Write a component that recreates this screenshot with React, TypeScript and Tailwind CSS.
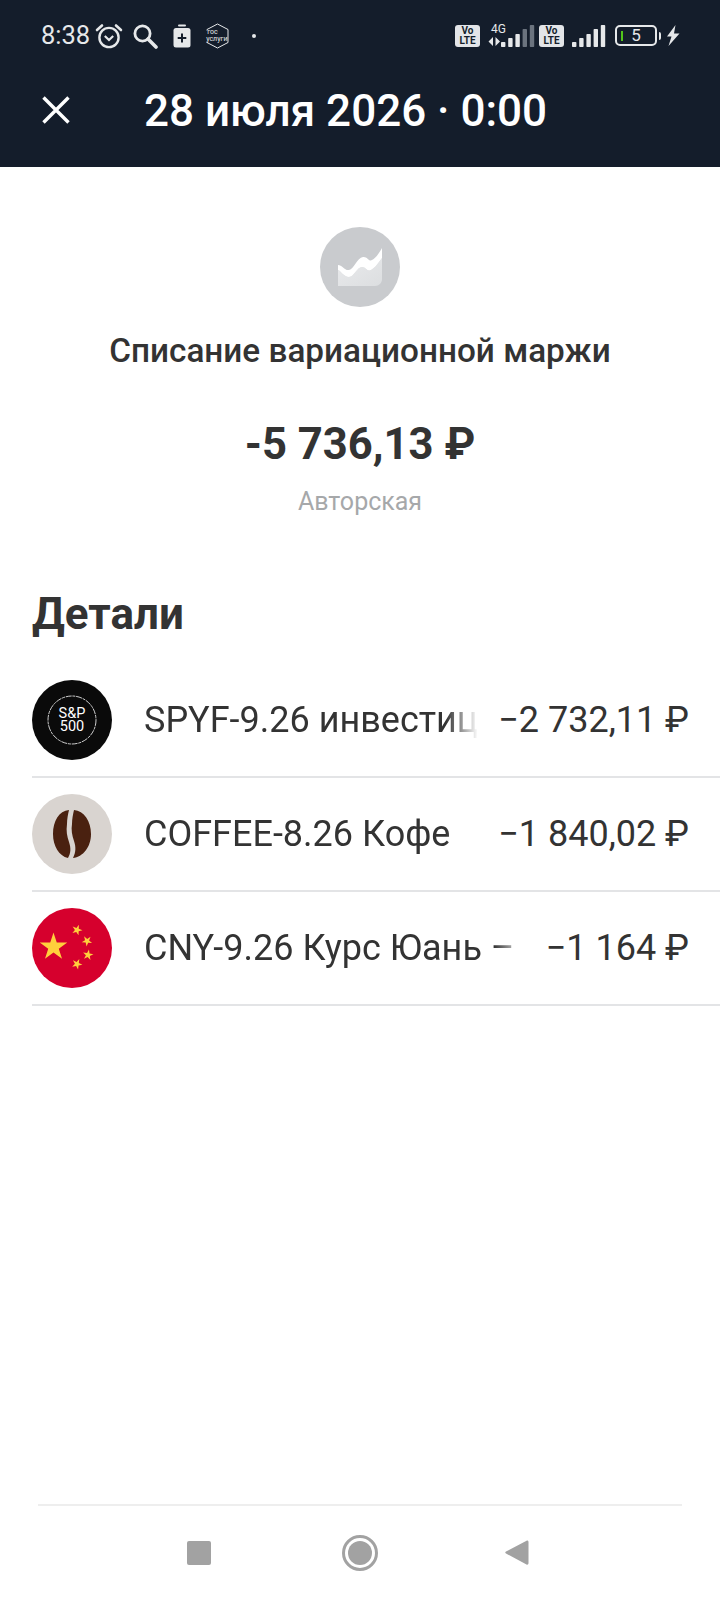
import React from "react";

const font = { fontFamily: "Roboto, sans-serif" };

function Star({ cx, cy, r, rot = 0 }: { cx: number; cy: number; r: number; rot?: number }) {
  const pts: string[] = [];
  for (let i = 0; i < 10; i++) {
    const rad = i % 2 === 0 ? r : r * 0.382;
    const a = ((-90 + rot + i * 36) * Math.PI) / 180;
    pts.push(`${(cx + rad * Math.cos(a)).toFixed(2)},${(cy + rad * Math.sin(a)).toFixed(2)}`);
  }
  return <polygon points={pts.join(" ")} fill="#ffcf3c" />;
}

function VoLte() {
  return (
    <div className="flex h-[22px] w-[25px] flex-col items-center justify-center rounded-[3px] bg-[#e3e5e8] text-[10px] font-bold leading-[10px] text-[#141d2b]">
      <span>Vo</span>
      <span>LTE</span>
    </div>
  );
}

function Bars({ dim }: { dim: number }) {
  const hs = [5, 9, 13, 18, 22];
  return (
    <svg width="34" height="22" viewBox="0 0 34 22">
      {hs.map((h, i) => (
        <rect key={i} x={i * 7.2} y={22 - h} width="4.4" height={h} rx="0.8" fill={i >= 5 - dim ? "#6b737e" : "#e6e8ea"} />
      ))}
    </svg>
  );
}

function Row({ icon, name, amount }: { icon: React.ReactNode; name: string; amount: string }) {
  return (
    <div className="ml-8 flex h-[114px] items-center border-b-2 border-[#e3e4e6] pr-[31px]">
      <div className="h-20 w-20 shrink-0 overflow-hidden rounded-full">{icon}</div>
      <div className="ml-8 min-w-0 flex-1 overflow-hidden whitespace-nowrap text-[36px] text-[#333333] [mask-image:linear-gradient(to_right,black_calc(100%-36px),transparent_calc(100%-4px))]">
        {name}
      </div>
      <div className="ml-4 shrink-0 whitespace-nowrap text-[36px] text-[#333333]">{amount}</div>
    </div>
  );
}

export default function App() {
  return (
    <div className="flex h-[1600px] w-[720px] flex-col bg-white" style={font}>
      <header className="h-[167px] shrink-0 bg-[#141d2b] text-white">
        <div className="flex h-[70px] items-center pl-[41px] pr-[40px] pt-[1px]">
          <span className="text-[25.5px] leading-none text-[#e6e8ea]">8:38</span>
          <svg className="ml-[5px]" width="28" height="28" viewBox="0 0 28 28" fill="none" stroke="#e6e8ea" strokeWidth="2.4">
            <circle cx="14" cy="15.5" r="9.6" />
            <path d="M9.8 14l4.2 4 4.2-4" strokeWidth="2.2" />
            <path d="M2 8l5-4.5M26 8l-5-4.5" strokeLinecap="round" strokeWidth="2.6" />
          </svg>
          <svg className="ml-[9px]" width="26" height="26" viewBox="0 0 26 26" fill="none" stroke="#e6e8ea">
            <circle cx="10.5" cy="10.5" r="7.6" strokeWidth="2.8" />
            <path d="M16 16l8 8" strokeWidth="3.6" strokeLinecap="round" />
          </svg>
          <svg className="ml-[15px]" width="18" height="24" viewBox="0 0 18 24">
            <rect x="5" y="0.5" width="8" height="2" rx="1" fill="#e6e8ea" />
            <rect x="0.5" y="4" width="17" height="19.5" rx="2.5" fill="#e6e8ea" />
            <path d="M9 9.5v9M4.7 14h8.6" stroke="#141d2b" strokeWidth="2" />
          </svg>
          <div className="relative ml-[14px] flex h-[26px] w-[25px] flex-col items-start justify-center pl-[1px]">
            <svg className="absolute inset-0" width="25" height="26" viewBox="0 0 25 26" fill="none" stroke="#e6e8ea" strokeWidth="1">
              <path d="M2 7.500V6.500L12.500 1 23 6.500v13L12.500 25 2 19.500v-1" />
            </svg>
            <span className="relative ml-[1px] text-[7px] leading-[7px] text-[#e6e8ea]">гос</span>
            <span className="relative text-[7px] leading-[7px] text-[#e6e8ea]">услуги</span>
          </div>
          <span className="ml-[22px] h-1 w-1 rounded-full bg-[#e6e8ea]" />
          <div className="ml-auto flex items-center">
            <VoLte />
            <div className="ml-2 flex flex-col items-start">
              <span className="ml-[3px] h-[11px] text-[12px] leading-[11px] text-[#e6e8ea]">4G</span>
              <div className="flex items-end">
                <svg className="mb-[1px]" width="13" height="9" viewBox="0 0 12 9" fill="#e6e8ea">
                  <path d="M4.500 0v9L0 4.500zM7 0l4.500 4.500L7 9z" />
                </svg>
                <div className="mt-[-10px] h-[22px]">
                  <Bars dim={2} />
                </div>
              </div>
            </div>
            <div className="ml-[4px]">
              <VoLte />
            </div>
            <div className="ml-2">
              <Bars dim={0} />
            </div>
            <div className="relative ml-[9px] flex h-[21px] w-[42px] items-center justify-center rounded-[5px] border-2 border-[#e6e8ea] text-[17px] leading-none text-[#e6e8ea]">
              <span className="absolute left-[4px] h-[10px] w-[2px] bg-[#52c41a]" />
              5
            </div>
            <span className="ml-[2px] h-2 w-[2px] rounded-r-sm bg-[#e6e8ea]" />
            <svg className="ml-[5px]" width="14" height="21" viewBox="0 0 14 21" fill="#e6e8ea">
              <path d="M9.500 0L1 11.500h4.500L2.500 21 13.500 8.500H8z" />
            </svg>
          </div>
        </div>
        <div className="flex h-[80px] items-center pl-[41px]">
          <svg width="30" height="30" viewBox="0 0 30 30" fill="none" stroke="#ffffff" strokeWidth="3.400">
            <path d="M2.500 2.500l25 25M27.500 2.500l-25 25" />
          </svg>
          <h1 className="ml-[73px] mt-[2px] whitespace-nowrap text-[44px] font-medium leading-none text-white">28 июля 2026 · 0:00</h1>
        </div>
      </header>

      <section className="flex flex-col items-center pt-[60px]">
        <div className="flex h-20 w-20 items-center justify-center rounded-full bg-[#c9cbce]">
          <svg width="44" height="38" viewBox="0 0 44 38">
            <defs>
              <linearGradient id="g" x1="0" y1="0" x2="1" y2="1">
                <stop offset="0" stopColor="#e9eaec" />
                <stop offset="1" stopColor="#dcdee0" />
              </linearGradient>
            </defs>
            <path d="M0 22c3 1 6 7 11 7 5 0 8-10 13-10 4 0 5 5 9 3 4-2 8-8 11-12v21c0 4-3 7-7 7H0z" fill="url(#g)" />
            <path d="M0 17c4 0 7 6 11 5 5-1 8-12 14-13 4-1 6 5 9 3 4-2 7-7 10-12v10c-3 4-7 10-11 12-4 2-5-3-9-3-5 0-8 10-13 10-5 0-8-6-11-7z" fill="#ffffff" />
          </svg>
        </div>
        <p className="mt-[20px] text-[33.3px] font-medium leading-[48px] text-[#333333]">Списание вариационной маржи</p>
        <p className="mt-[40px] text-[43.6px] font-bold leading-[60px] text-[#333333]">-5 736,13 ₽</p>
        <p className="mt-[11px] text-[25px] leading-[32px] text-[#a6a8aa]">Авторская</p>
      </section>

      <h2 className="ml-8 mt-[66px] text-[44px] font-bold leading-[60px] text-[#333333]">Детали</h2>

      <div className="mt-[20px]">
        <Row
          name="SPYF-9.26 инвестиции в S&P 500"
          amount="−2 732,11 ₽"
          icon={
            <div className="relative flex h-full w-full flex-col items-center justify-center bg-[#0a0a0a] text-[14.500px] leading-[13.500px] text-white">
              <svg className="absolute inset-0" width="80" height="80" viewBox="0 0 80 80" fill="none" stroke="#ffffff" strokeWidth="0.8">
                <circle cx="40" cy="40" r="24" strokeDasharray="6 0.800 3 0.800" />
              </svg>
              <span>S&amp;P</span>
              <span>500</span>
            </div>
          }
        />
        <Row
          name="COFFEE-8.26 Кофе"
          amount="−1 840,02 ₽"
          icon={
            <div className="flex h-full w-full items-center justify-center bg-[#d9d4d0]">
              <svg width="40" height="50" viewBox="0 0 40 50" fill="#4a2110">
                <path d="M17 1C7 2 1 12 1 25c0 12 6 22 15 24 3-5 3-10 1-16-2-6-3-11-2-18 0-5 1-10 2-14z" />
                <path d="M22 1c10 1 17 11 17 24 0 13-8 23-18 24 3-6 3-11 1-17-2-6-3-11-2-17 0-5 1-10 2-14z" />
              </svg>
            </div>
          }
        />
        <Row
          name="CNY-9.26 Курс Юань –"
          amount="−1 164 ₽"
          icon={
            <svg width="80" height="80" viewBox="0 0 80 80">
              <rect width="80" height="80" fill="#d6002d" />
              <Star cx={21.500} cy={39} r={14.500} />
              <Star cx={45} cy={22} r={5.500} rot={20} />
              <Star cx={55} cy={33} r={5.500} rot={40} />
              <Star cx={56} cy={47} r={5.500} rot={10} />
              <Star cx={45} cy={56} r={5.500} rot={25} />
            </svg>
          }
        />
      </div>

      <nav className="mx-[38px] mt-auto flex h-[96px] shrink-0 items-center justify-between border-t-2 border-[#eeeeee] pb-[1px] pl-[149px] pr-[153px]">
        <span className="h-6 w-6 rounded-[2px] bg-[#a2a2a2]" />
        <svg className="ml-[4px]" width="36" height="36" viewBox="0 0 36 36">
          <circle cx="18" cy="18" r="16.500" fill="none" stroke="#a2a2a2" strokeWidth="3" />
          <circle cx="18" cy="18" r="12" fill="#a2a2a2" />
        </svg>
        <svg width="24" height="27" viewBox="0 0 24 27">
          <path d="M22 1.500c1 0 1.500.6 1.500 1.500v21c0 1.500-1 2-2 1.500L1 14.500c-1-.6-1-1.500 0-2z" fill="#a2a2a2" />
        </svg>
      </nav>
    </div>
  );
}
